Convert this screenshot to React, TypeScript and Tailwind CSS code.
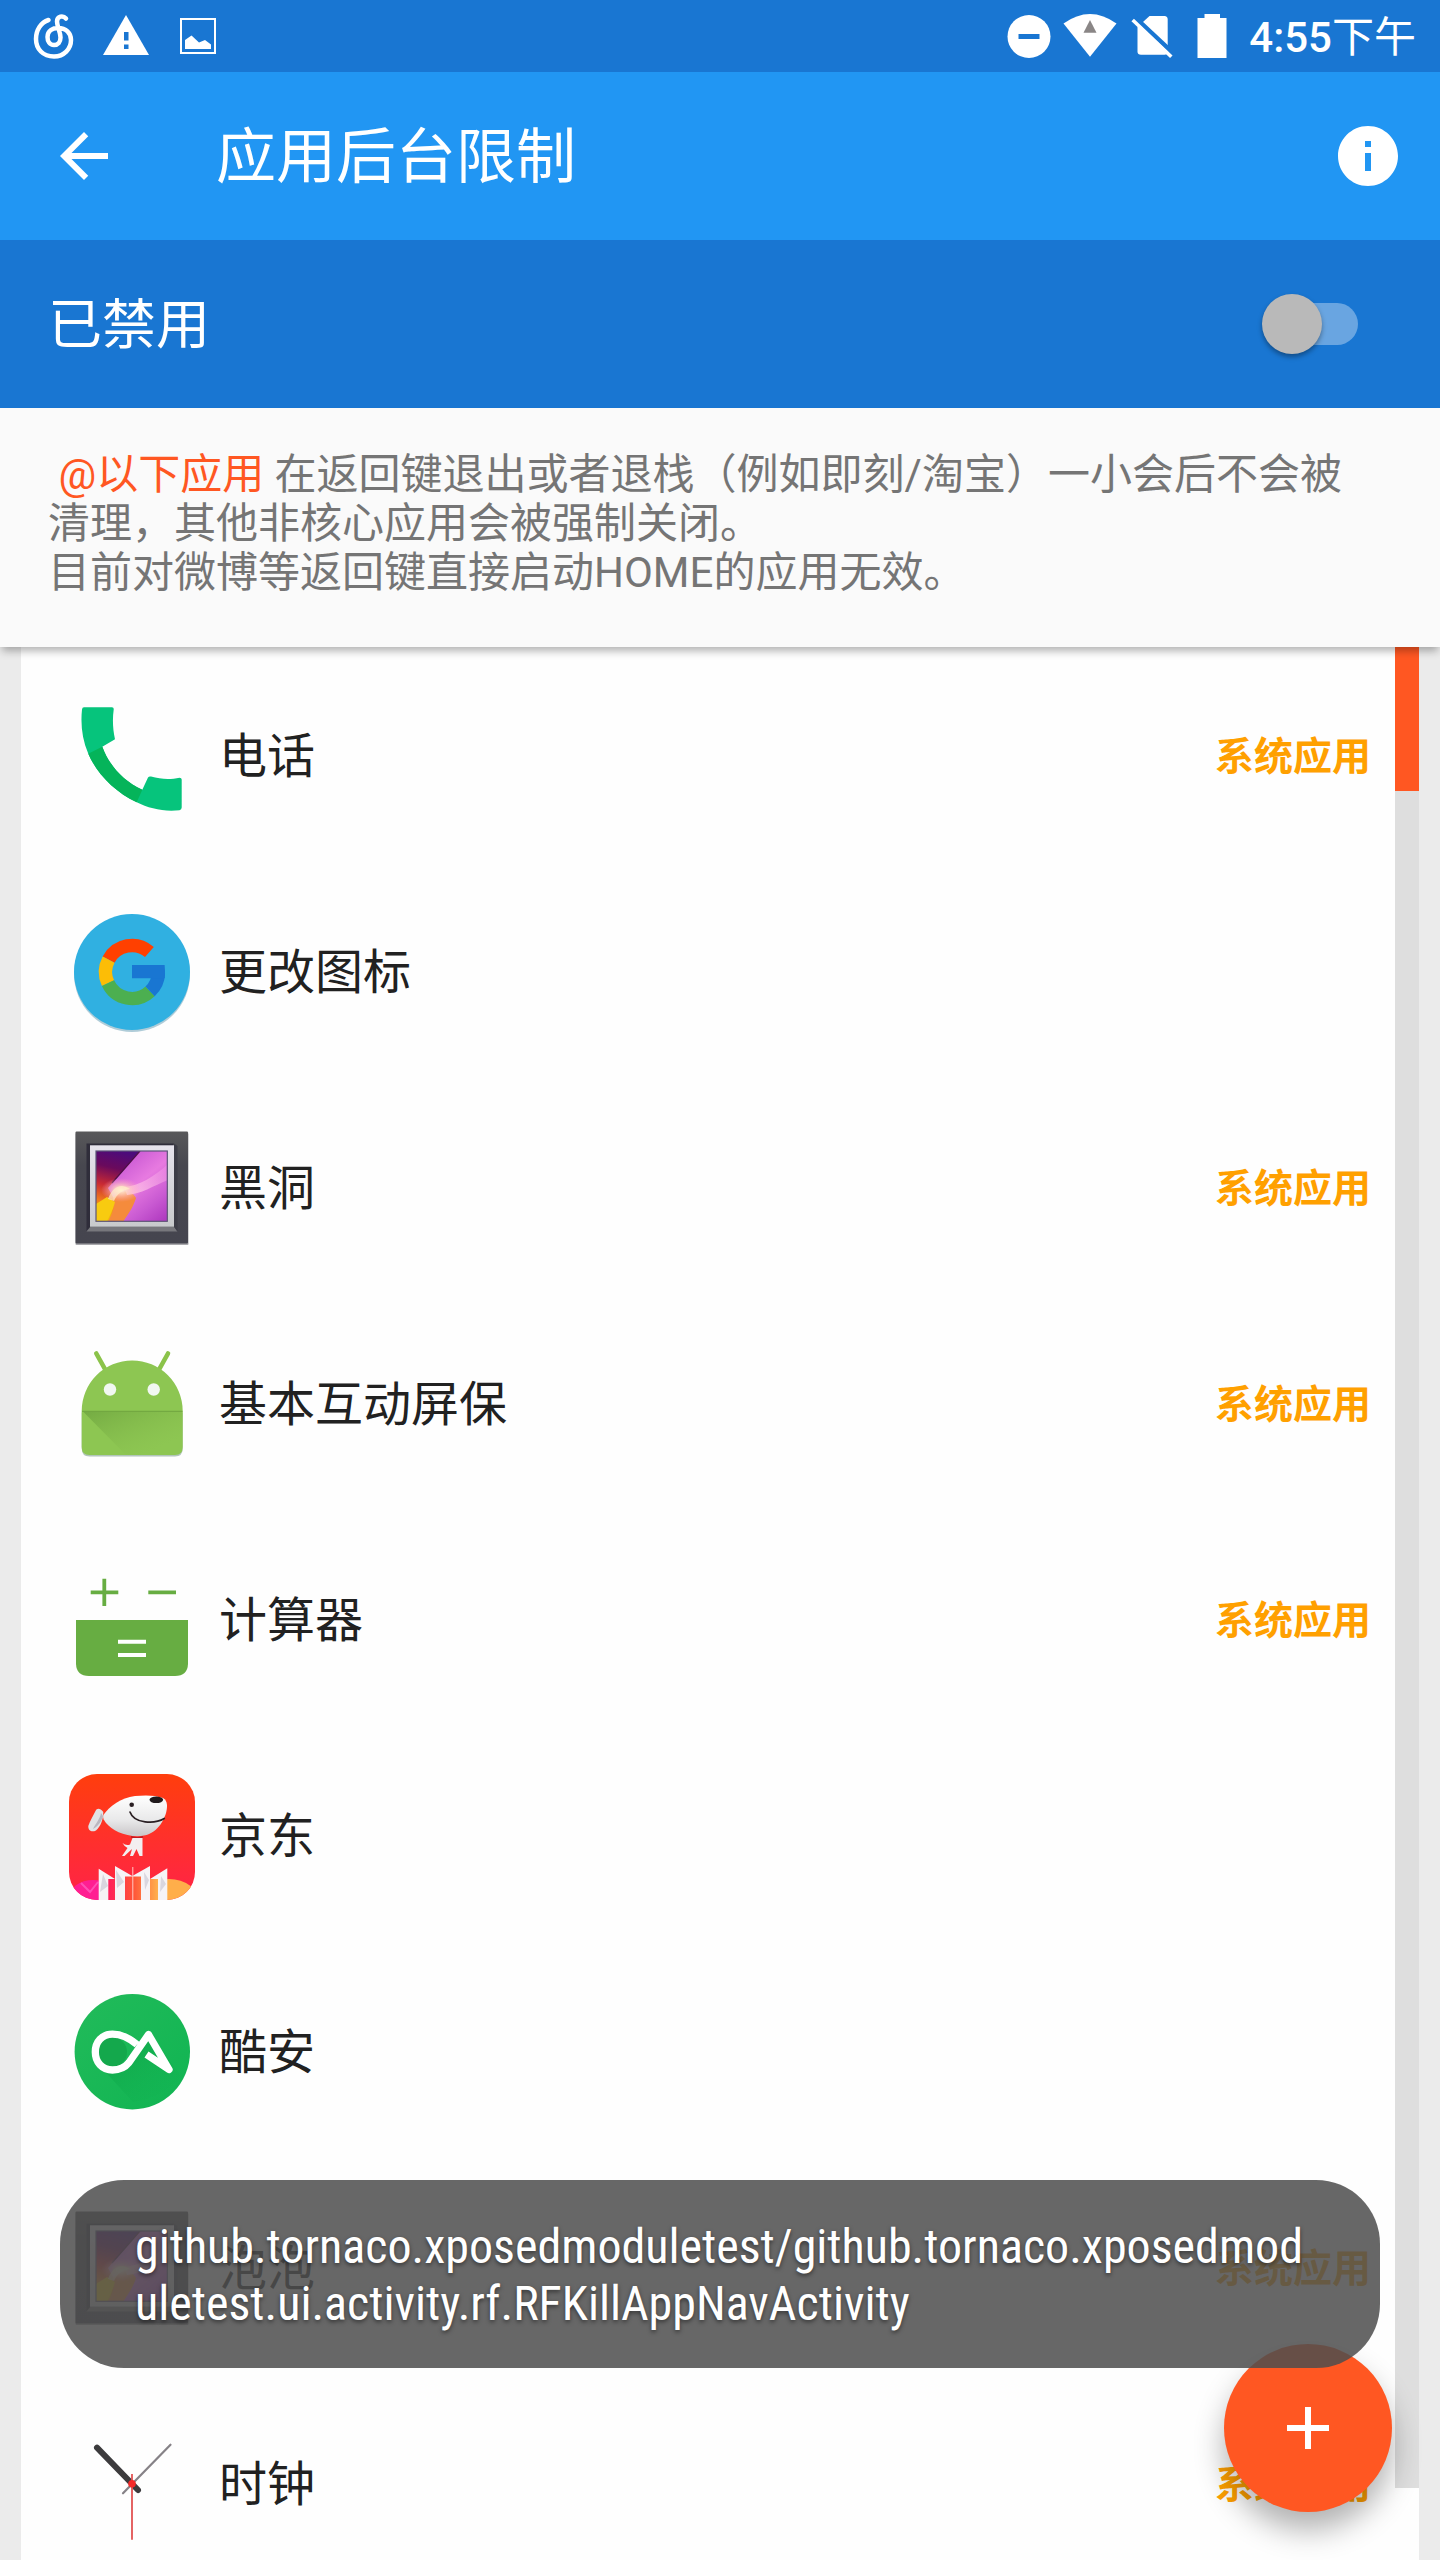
import { useState } from "react";
import type { ReactNode } from "react";

interface AppEntry {
  name: string;
  system: boolean;
  icon: ReactNode;
}

function StatusIcon({ children }: { children: ReactNode }) {
  return (
    <svg viewBox="0 0 48 48" className="size-12 overflow-visible" fill="white" aria-hidden="true">
      {children}
    </svg>
  );
}

function AppIcon({ children }: { children: ReactNode }) {
  return (
    <svg viewBox="0 0 126 126" className="size-[126px] shrink-0" fill="none" aria-hidden="true">
      {children}
    </svg>
  );
}

function PhoneIcon() {
  return (
    <AppIcon>
      <path
        d="M15 13.3H43Q45 13.3 44.7 15.5C43.4 25 43.7 35 46 45.3L33.3 52.7C40 71 54 87 73.3 95.7L79 83.5Q80 82 82 82.5C92 85.5 102 85.5 110.5 83.7Q112.7 83.7 112.7 85.5V113.5Q112.7 115.7 110.5 116.2C95 118 80 114.5 67.7 108.3C46 98 28 80 19.3 59.7C13 45 11.5 30 13 15.5Q13.2 13.3 15 13.3Z"
        fill="#06c47c"
      />
      <path
        d="M19.3 59.7L33.3 52.7C40 71 54 87 73.3 95.7L67.7 108.3C46 98 28 80 19.3 59.7Z"
        fill="#05b45a"
      />
    </AppIcon>
  );
}

function IconChangerIcon() {
  return (
    <AppIcon>
      <circle cx="63" cy="64" r="58" fill="#1e6f93" opacity="0.35" />
      <circle cx="63" cy="62" r="58" fill="#30b0e1" />
      <g strokeWidth="13.4">
        <path d="M80.4 42A26.5 26.5 0 0 0 39.6 49.6" stroke="#ff4000" />
        <path d="M39.6 49.6A26.5 26.5 0 0 0 39 73.2" stroke="#fcbd06" />
        <path d="M39 73.2A26.5 26.5 0 0 0 81.1 81.4" stroke="#4caf50" />
        <path d="M81.1 81.4A26.5 26.5 0 0 0 89.4 63" stroke="#1976d2" />
      </g>
      <path d="M63 55H95.6Q96.4 61 95.8 68.3H63Z" fill="#1976d2" />
    </AppIcon>
  );
}

function GalleryIcon() {
  return (
    <AppIcon>
      <defs>
        <linearGradient id="frame" x1="0" y1="0" x2="0" y2="1">
          <stop offset="0" stopColor="#58585a" />
          <stop offset="0.3" stopColor="#47474f" />
          <stop offset="1" stopColor="#45454f" />
        </linearGradient>
        <linearGradient id="mat" x1="0" y1="0" x2="0" y2="1">
          <stop offset="0" stopColor="#e6e3ec" />
          <stop offset="1" stopColor="#c8cacc" />
        </linearGradient>
        <linearGradient id="dusk" x1="0.35" y1="0" x2="0.1" y2="1">
          <stop offset="0" stopColor="#4b0b7c" />
          <stop offset="0.25" stopColor="#6a0a5c" />
          <stop offset="0.5" stopColor="#c92a33" />
          <stop offset="0.72" stopColor="#f07a1c" />
          <stop offset="1" stopColor="#f5d400" />
        </linearGradient>
        <linearGradient id="bloom" x1="0.2" y1="0" x2="0.9" y2="1">
          <stop offset="0" stopColor="#c04fd0" />
          <stop offset="0.45" stopColor="#e77ae0" />
          <stop offset="0.75" stopColor="#c95ad2" />
          <stop offset="1" stopColor="#b03ac0" />
        </linearGradient>
        <radialGradient id="glow">
          <stop offset="0" stopColor="#fff6dc" />
          <stop offset="0.35" stopColor="#ffd2c0" stopOpacity="0.8" />
          <stop offset="1" stopColor="#ff9ac0" stopOpacity="0" />
        </radialGradient>
        <linearGradient id="beam" x1="0" y1="1" x2="1" y2="0">
          <stop offset="0" stopColor="#ffd0e4" stopOpacity="0.9" />
          <stop offset="1" stopColor="#ffa8ee" stopOpacity="0.2" />
        </linearGradient>
        <clipPath id="picture">
          <path d="M27 25H98.3V95.3H27Z" />
        </clipPath>
      </defs>
      <rect x="6.5" y="7" width="113" height="112" rx="1" fill="#a8a8ac" />
      <rect x="6.5" y="5.5" width="112.5" height="112" rx="1" fill="url(#frame)" />
      <path d="M17.5 17.5H105L103 21H21V101L17.5 105Z" fill="#2f2d3a" />
      <path d="M17.5 105.5L21.5 100.7H105L108.5 105.5Z" fill="#77777c" />
      <path d="M105 17.5V100.7L108.5 105.5V20Z" fill="#3d3d47" />
      <rect x="21" y="19.3" width="84" height="81.4" fill="url(#mat)" />
      <g clipPath="url(#picture)">
        <rect x="27" y="25" width="72" height="71" fill="url(#dusk)" />
        <path d="M71 25H99V96H53L48 78L39 62L46 54Z" fill="url(#bloom)" />
        <path d="M44 72C53 62 63 64 67 72C64 82 59 88 54 96H38C44 88 46 80 44 72Z" fill="#f58b3c" />
        <path d="M27 78L38 71L46 76C44 84 41 90 37 96H27Z" fill="#f8cb10" />
        <path d="M55 61C70 60 86 50 99 38V54C84 60 72 68 58 69Z" fill="url(#beam)" />
        <path d="M71 25L43 57" stroke="#4c1045" strokeWidth="1.2" />
        <ellipse cx="52" cy="64" rx="20" ry="12" fill="url(#glow)" />
        <path d="M39 73C43 62 51 56 61 63C53 64 48 68 45 75Z" fill="#fff0c8" opacity="0.7" />
      </g>
      <rect x="27" y="25" width="71.3" height="70.3" stroke="#5c5578" strokeWidth="1.2" />
    </AppIcon>
  );
}

function AndroidIcon() {
  return (
    <AppIcon>
      <defs>
        <linearGradient id="droid-shade" x1="0" y1="0" x2="0.8" y2="0.8">
          <stop offset="0" stopColor="#5f9436" stopOpacity="0.55" />
          <stop offset="1" stopColor="#7fb548" stopOpacity="0" />
        </linearGradient>
      </defs>
      <path
        d="M12.7 70.500H113.700V106.500Q113.700 114.500 106 114.500H20.500Q12.700 114.500 12.700 106.500Z"
        fill="#7d9f8c"
        opacity="0.6"
      />
      <path d="M27.3 11.5L36.5 28M99 11.5L89.8 28" stroke="#8bc34a" strokeWidth="4.6" strokeLinecap="round" />
      <path
        d="M12.7 69A50.5 50.5 0 0 1 113.7 69V105Q113.7 113 106 113H20.5Q12.7 113 12.7 105Z"
        fill="#8dc652"
      />
      <path d="M14 69.500H113.500V108L108 113H57Z" fill="url(#droid-shade)" />
      <path d="M13 69.3H113.5" stroke="#6fa33f" strokeWidth="1" />
      <circle cx="41" cy="47.5" r="6.2" fill="#f1f7f1" />
      <circle cx="84.7" cy="47.5" r="6.2" fill="#f1f7f1" />
    </AppIcon>
  );
}

function CalculatorIcon() {
  return (
    <AppIcon>
      <path d="M21.7 34.3H49.3M35.3 20.7V48M79.3 34.3H107" stroke="#67ad42" strokeWidth="3.8" />
      <path d="M7 62H119V106Q118.5 118 106 118H20Q7.5 118 7 106Z" fill="#67ad42" />
      <path d="M49 83.7H77M49 97H77" stroke="white" strokeWidth="3.9" />
    </AppIcon>
  );
}

function JdIcon() {
  return (
    <AppIcon>
      <defs>
        <linearGradient id="jd-bg" x1="0" y1="0" x2="0" y2="1">
          <stop offset="0" stopColor="#ff3e0d" />
          <stop offset="1" stopColor="#ff2348" />
        </linearGradient>
        <linearGradient id="jd-head" x1="0" y1="0" x2="0" y2="1">
          <stop offset="0" stopColor="#ffffff" />
          <stop offset="0.6" stopColor="#e9e9ea" />
          <stop offset="1" stopColor="#c9c6c8" />
        </linearGradient>
        <linearGradient id="jd-slot" x1="0" y1="0" x2="1" y2="0">
          <stop offset="0" stopColor="#ff1f5c" />
          <stop offset="0.5" stopColor="#ff5338" />
          <stop offset="1" stopColor="#ffb04e" />
        </linearGradient>
        <clipPath id="jd-clip">
          <rect width="126" height="126" rx="28" />
        </clipPath>
      </defs>
      <g clipPath="url(#jd-clip)">
        <rect width="126" height="126" fill="url(#jd-bg)" />
        <ellipse cx="24" cy="124" rx="24" ry="18" fill="#ff1f92" />
        <path d="M12 109L21 118L29 108" stroke="#ff4fb4" strokeWidth="2" />
        <ellipse cx="100" cy="128" rx="30" ry="23" fill="#ffae4a" />
        <path d="M29.7 94.7L46 105V92L63.3 102L81 92V105L98.3 94.3V126H29.7Z" fill="#f6f3f6" />
        <path d="M34 100L39 112L31 118ZM47 96L55 108L48 114ZM75 98L80 106L76 116ZM92 102L97 110L91 118Z" fill="#d9d6df" />
        <path d="M39.3 105H46V126H39.3ZM56 102.5H72V126H56ZM81 105H89V126H81Z" fill="url(#jd-slot)" />
        <path d="M63.8 93V126" stroke="#ffc9c4" strokeWidth="1" />
      </g>
      <path
        d="M34.3 38C31 34 28 34 26.5 37C24 42 21 47 19.3 52C19 57 23 58.5 27 56.5C32 52 34 46 34.3 38Z"
        fill="#e2e2e5"
      />
      <path d="M32 39C31 45 27 49 24 55C30 52 33 46 34 42Z" fill="#b9b6c0" />
      <path
        d="M34.3 41C40 33 52 23.5 66 22C76 21 86 21 94 24C99 27 98.5 33 97 39C94 49 86 62 69 62.3C54 62 43 56 37 49C35 46.5 33.5 44 34.3 41Z"
        fill="url(#jd-head)"
      />
      <ellipse cx="87.3" cy="25.8" rx="6.8" ry="3.3" fill="#201a1c" />
      <circle cx="62.7" cy="30.7" r="2.3" fill="#2b2024" />
      <path d="M61 38C65 50 86 50 95.3 44.5" stroke="#2b2024" strokeWidth="1.7" strokeLinecap="round" />
      <path d="M62 62.7Q68 65 74 62.7" stroke="#c01a22" strokeWidth="1.6" />
      <path
        d="M63.5 64H73.5V82H70.5L67.5 75L64 82H61L63 75L55.5 82H53L58.5 74Q55 72 53.5 69Q57 72 61 70.5Z"
        fill="#f3eef0"
      />
    </AppIcon>
  );
}

function CoolapkIcon() {
  return (
    <AppIcon>
      <defs>
        <linearGradient id="cool-bg" x1="0" y1="0" x2="1" y2="1">
          <stop offset="0" stopColor="#22bb5a" />
          <stop offset="1" stopColor="#10b452" />
        </linearGradient>
        <linearGradient id="cool-shade" x1="0" y1="0" x2="1" y2="1">
          <stop offset="0" stopColor="#089a40" stopOpacity="0.7" />
          <stop offset="1" stopColor="#10b452" stopOpacity="0" />
        </linearGradient>
      </defs>
      <circle cx="63.3" cy="61.7" r="57.7" fill="url(#cool-bg)" />
      <path d="M31 76L64 112Q94 108 112 86L82 46L60 72Z" fill="url(#cool-shade)" />
      <circle cx="43" cy="62" r="15" fill="#14a84c" />
      <path
        d="M68 54.5C60 48 53 44.2 43.5 44.2C33 44.2 26.3 52 26.3 62C26.3 72 33 80 43.5 80C51 80 56 77.5 60 72.5L79.5 44.5L100 79.5L77.5 64.5"
        stroke="white"
        strokeWidth="7.3"
        strokeLinejoin="round"
      />
    </AppIcon>
  );
}

function ClockIcon() {
  return (
    <AppIcon>
      <path d="M101.5 22.7L54 71.3" stroke="#868287" strokeWidth="2.2" strokeLinecap="round" />
      <path d="M28 25.7L69 68" stroke="#3c3b3d" strokeWidth="6" strokeLinecap="round" />
      <path d="M63 52V117.7" stroke="#e25353" strokeWidth="1.8" />
      <circle cx="63" cy="61.7" r="3.8" fill="#f52a2a" />
    </AppIcon>
  );
}

const apps: AppEntry[] = [
  { name: "电话", system: true, icon: <PhoneIcon /> },
  { name: "更改图标", system: false, icon: <IconChangerIcon /> },
  { name: "黑洞", system: true, icon: <GalleryIcon /> },
  { name: "基本互动屏保", system: true, icon: <AndroidIcon /> },
  { name: "计算器", system: true, icon: <CalculatorIcon /> },
  { name: "京东", system: false, icon: <JdIcon /> },
  { name: "酷安", system: false, icon: <CoolapkIcon /> },
  { name: "泡泡", system: true, icon: <GalleryIcon /> },
  { name: "时钟", system: true, icon: <ClockIcon /> },
];

function StatusBar() {
  return (
    <div className="flex h-[72px] shrink-0 items-center justify-between bg-[#1976d2] pr-6 pl-[30px] text-white">
      <div className="flex gap-6">
        <StatusIcon>
          <path
            d="M36 6.5C33 3 27 4 27 9.5C27 14.5 30.5 20 30.5 25.5C30.5 30 28 33 24 33C19.5 33 17.5 29 17.5 25C17.5 18.5 23 16 28 16C36 16 41 21 41 28C41 37 34 44.5 24 44.5C13 44.5 6 37 6 27C6 18 11 10.5 18.5 8"
            fill="none"
            stroke="white"
            strokeWidth="4.5"
            strokeLinecap="round"
          />
        </StatusIcon>
        <StatusIcon>
          <path d="M24 3L47 43H1Z" />
          <path d="M22 20H26.5V28.5H22ZM22 32.5H26.5V37H22Z" fill="#1976d2" />
        </StatusIcon>
        <StatusIcon>
          <rect x="7" y="7" width="34" height="34" fill="none" stroke="white" strokeWidth="2" />
          <path d="M11 37V28L17.5 23.5L25 30.5L31 28L37 32.5V37Z" />
        </StatusIcon>
      </div>
      <div className="flex items-center gap-[13px]">
        <StatusIcon>
          <circle cx="24" cy="24.5" r="21.5" />
          <path d="M13.5 22H34.5V27H13.5Z" fill="#1976d2" />
        </StatusIcon>
        <StatusIcon>
          <path d="M-2.5 11.5Q24 -7.5 50.5 11.5L24 44.7Z" />
          <path d="M24 8L30.5 20.7H17.5Z" fill="#8a8686" />
        </StatusIcon>
        <StatusIcon>
          <path d="M10.5 15L22.5 4H37.5Q40.7 4 40.7 7.5V39.5Q40.7 42.7 37.5 42.7H14Q10.5 42.7 10.5 39.5Z" />
          <path d="M9 6.5L47.5 42.5" stroke="#1976d2" strokeWidth="4.5" />
          <path d="M5.7 8L44.3 44.7" stroke="white" strokeWidth="3.6" />
        </StatusIcon>
        <StatusIcon>
          <path d="M16.5 2H32V6H38.5V46H9.5V6H16.5Z" />
        </StatusIcon>
        <span className="pt-1 text-[42px] leading-[48px]">
          <span className="font-medium">4:55</span>下午
        </span>
      </div>
    </div>
  );
}

function AppBar() {
  return (
    <header className="flex h-[168px] shrink-0 items-center bg-[#2196f3] pr-9 pl-12 text-white">
      <button type="button" aria-label="返回">
        <svg viewBox="0 0 24 24" className="size-[72px]" fill="currentColor">
          <path d="M20 11H7.83l5.59-5.59L12 4l-8 8 8 8 1.41-1.41L7.83 13H20v-2z" />
        </svg>
      </button>
      <h1 className="ml-24 flex-1 pt-1 text-[60px] leading-[72px]">应用后台限制</h1>
      <button type="button" aria-label="关于">
        <svg viewBox="0 0 24 24" className="size-[72px]" fill="currentColor">
          <path d="M12 2C6.48 2 2 6.48 2 12s4.48 10 10 10 10-4.48 10-10S17.52 2 12 2zm1 15h-2v-6h2v6zm0-8h-2V7h2v2z" />
        </svg>
      </button>
    </header>
  );
}

function AppRow({ app }: { app: AppEntry }) {
  return (
    <li className="flex h-[216px] items-center pr-12 pl-12">
      {app.icon}
      <span className="ml-6 flex-1 text-[48px] leading-[56px] text-[#212121]">{app.name}</span>
      {app.system && (
        <span className="text-[39px] leading-[48px] font-bold text-[#ffa000]">系统应用</span>
      )}
    </li>
  );
}

export default function App() {
  const [enabled, setEnabled] = useState(false);

  return (
    <div
      lang="zh-CN"
      className="relative flex h-screen flex-col overflow-hidden bg-[#ebebeb] [font-family:Roboto,'Noto_Sans_CJK_SC',sans-serif]"
    >
      <StatusBar />
      <AppBar />

      {/* Master switch */}
      <div className="flex h-[168px] shrink-0 items-center justify-between bg-[#1976d2] pr-[82px] pl-12">
        <label htmlFor="master" className="pt-1 text-[54px] leading-[60px] text-white">
          {enabled ? "已启用" : "已禁用"}
        </label>
        <input
          id="master"
          type="checkbox"
          role="switch"
          checked={enabled}
          onChange={(e) => setEnabled(e.target.checked)}
          className="relative h-[42px] w-[84px] appearance-none rounded-full bg-white/35 before:absolute before:top-[-9px] before:left-[-12px] before:size-[60px] before:rounded-full before:bg-[#b9b9b9] before:shadow-[0_3px_5px_rgba(0,0,0,0.35)] checked:before:left-9 checked:before:bg-white"
        />
      </div>

      {/* Description */}
      <p className="relative z-10 shrink-0 bg-[#fafafa] pt-[42px] pr-20 pb-[50px] pl-12 text-[42px] leading-[49px] whitespace-pre-wrap text-[#757575] shadow-[0_6px_8px_-2px_rgba(0,0,0,0.3)]">
        <span className="text-[#ff5722]"> @以下应用</span>
        {" 在返回键退出或者退栈（例如即刻/淘宝）一小会后不会被清理，其他非核心应用会被强制关闭。\n目前对微博等返回键直接启动HOME的应用无效。"}
      </p>

      {/* App list */}
      <main className="relative mx-[21px] min-h-0 flex-1 overflow-hidden bg-[#fefefe]">
        <ul className="pt-0.5">
          {apps.map((app) => (
            <AppRow key={app.name} app={app} />
          ))}
        </ul>
        <div className="absolute top-0 right-0 bottom-[72px] w-6 bg-[#dedede]">
          <div className="h-36 bg-[#ff5722]" />
        </div>
      </main>

      <button
        type="button"
        aria-label="添加"
        className="absolute right-12 bottom-12 z-20 flex size-[168px] items-center justify-center rounded-full bg-[#ff5722] text-white shadow-[0_18px_30px_rgba(0,0,0,0.3)]"
      >
        <svg viewBox="0 0 24 24" className="size-[72px]" fill="currentColor">
          <path d="M19 13h-6v6h-2v-6H5v-2h6V5h2v6h6v2z" />
        </svg>
      </button>

      {/* Toast */}
      <div
        role="status"
        className="absolute inset-x-[60px] bottom-48 z-30 rounded-[64px] bg-[#4e4e4e]/86 px-[75px] pt-[38px] pb-9 text-[48px] leading-[57px] break-all text-white [font-family:'Roboto_Condensed',Roboto,sans-serif] [text-shadow:0_2px_4px_rgba(0,0,0,0.5)]"
      >
        github.tornaco.xposedmoduletest/github.tornaco.xposedmoduletest.ui.activity.rf.RFKillAppNavActivity
      </div>
    </div>
  );
}
